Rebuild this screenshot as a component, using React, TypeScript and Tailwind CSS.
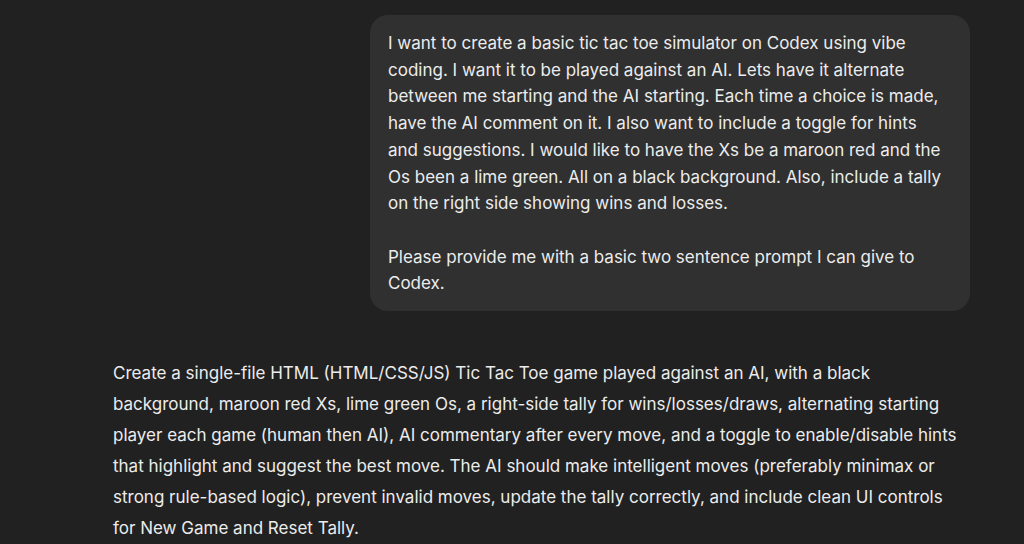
const userLines = [
  'I want to create a basic tic tac toe simulator on Codex using vibe',
  'coding. I want it to be played against an AI. Lets have it alternate',
  'between me starting and the AI starting. Each time a choice is made,',
  'have the AI comment on it. I also want to include a toggle for hints',
  'and suggestions. I would like to have the Xs be a maroon red and the',
  'Os been a lime green. All on a black background. Also, include a tally',
  'on the right side showing wins and losses.',
]

const userLines2 = ['Please provide me with a basic two sentence prompt I can give to', 'Codex.']

const replyLines = [
  'Create a single-file HTML (HTML/CSS/JS) Tic Tac Toe game played against an AI, with a black',
  'background, maroon red Xs, lime green Os, a right-side tally for wins/losses/draws, alternating starting',
  'player each game (human then AI), AI commentary after every move, and a toggle to enable/disable hints',
  'that highlight and suggest the best move. The AI should make intelligent moves (preferably minimax or',
  'strong rule-based logic), prevent invalid moves, update the tally correctly, and include clean UI controls',
  'for New Game and Reset Tally.',
]

export default function App() {
  return (
    <div
      className="min-h-screen w-full bg-[#212121] text-[#ececec] overflow-hidden"
      style={{ fontFamily: 'Inter, "Noto Sans", sans-serif' }}
    >
      {/* user message */}
      <div className="flex justify-end pr-[54px] pt-[15px]">
        <div className="w-[600px] rounded-[18px] bg-[#303030] pl-[18px] pr-[16px] pt-[15px] pb-[14px] text-[17px] leading-[26.7px]">
          <p>
            {userLines.map((l) => (
              <span key={l} className="block whitespace-nowrap">
                {l}
              </span>
            ))}
          </p>
          <p className="mt-[26.7px]">
            {userLines2.map((l) => (
              <span key={l} className="block whitespace-nowrap">
                {l}
              </span>
            ))}
          </p>
        </div>
      </div>

      {/* assistant reply */}
      <div className="pl-[113px] pt-[47px] text-[17px] leading-[31px]">
        <p>
          {replyLines.map((l) => (
            <span key={l} className="block whitespace-nowrap">
              {l}
            </span>
          ))}
        </p>
      </div>
    </div>
  )
}
